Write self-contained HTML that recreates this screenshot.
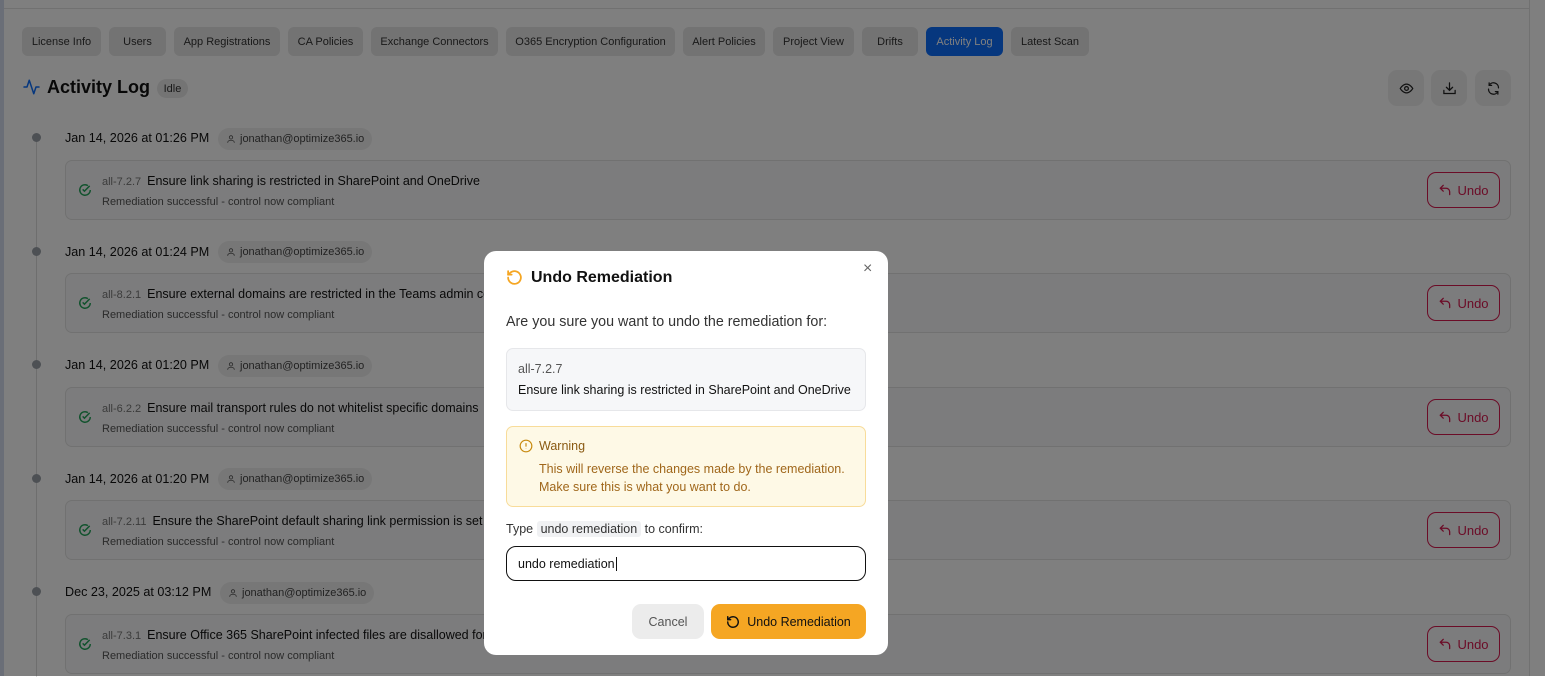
<!DOCTYPE html>
<html><head><meta charset="utf-8"><style>
*{box-sizing:border-box;margin:0;padding:0}
body{width:1545px;height:676px;overflow:hidden;background:#fff;font-family:"Liberation Sans",sans-serif;position:relative;color:#111}
.abs{position:absolute}
.lbar{left:0;top:0;width:4px;height:676px;background:#d4ddef}
.topl{left:4px;top:8px;width:1525px;height:1px;background:#e2e2e2}
.rl{left:1529px;top:0;width:1px;height:676px;background:#e2e2e2}
.tab{position:absolute;top:27px;height:29px;border-radius:6px;background:#e6e6e6;font-size:11px;color:#333;display:flex;align-items:center;justify-content:center}
.tab.act{background:#0d6efd;color:#fff}
h1{position:absolute;left:47px;top:77px;font-size:18px;font-weight:bold;color:#111}
.idle{left:157px;top:79px;width:31px;height:19px;border-radius:10px;background:#e8e8e8;font-size:11px;color:#333;display:flex;align-items:center;justify-content:center}
.ib{position:absolute;top:70px;width:36px;height:36px;border-radius:9px;background:#efefef;display:flex;align-items:center;justify-content:center}
.tl{left:36px;top:137px;width:1px;height:540px;background:#ddd}
.dot{position:absolute;left:32px;width:9px;height:9px;border-radius:50%;background:#9aa0a8}
.date{position:absolute;left:65px;font-size:12.6px;color:#111}
.chip{position:absolute;left:218px;height:22px;border-radius:11px;background:#efefef;font-size:11px;color:#444;display:flex;align-items:center;padding:0 8px 0 8px;gap:4px}
.card{position:absolute;left:65px;width:1446px;height:60px;border:1px solid #e2e2e2;border-radius:7px;background:#f8f9fa}
.card .ck{position:absolute;left:12px;top:22px}
.card .t{position:absolute;left:36px;top:13px;font-size:12.5px;color:#111;white-space:nowrap}
.card .t span{font-size:11px;color:#777;margin-right:6px}
.card .s{position:absolute;left:36px;top:35px;font-size:11px;color:#555}
.card .u{position:absolute;left:1361px;top:11px;width:73px;height:36px;border:1px solid #d6194f;border-radius:9px;color:#d6194f;font-size:13px;display:flex;align-items:center;justify-content:center;gap:5px}
.ov{left:0;top:0;width:1545px;height:676px;background:rgba(0,0,0,.5)}
.m{left:484px;top:251px;width:404px;height:404px;background:#fff;border-radius:12px}
</style></head><body>
<svg width="0" height="0" style="position:absolute"><defs>
<symbol id="p" viewBox="0 0 24 24"><g fill="none" stroke="#555" stroke-width="2"><circle cx="12" cy="8" r="4"/><path d="M4 21c0-4 4-6 8-6s8 2 8 6"/></g></symbol>
<symbol id="un" viewBox="0 0 24 24"><g fill="none" stroke="#d6194f" stroke-width="2.2" stroke-linecap="round" stroke-linejoin="round"><path d="M9 14L4 9l5-5"/><path d="M4 9h10a6 6 0 0 1 6 6v5"/></g></symbol>
</defs></svg>
<div class="abs lbar"></div><div class="abs topl"></div><div class="abs rl"></div>
<div class="tab" style="left:22px;width:79px">License Info</div>
<div class="tab" style="left:109px;width:57px">Users</div>
<div class="tab" style="left:174px;width:106px">App Registrations</div>
<div class="tab" style="left:288px;width:75px">CA Policies</div>
<div class="tab" style="left:371px;width:127px">Exchange Connectors</div>
<div class="tab" style="left:506px;width:169px">O365 Encryption Configuration</div>
<div class="tab" style="left:683px;width:82px">Alert Policies</div>
<div class="tab" style="left:773px;width:81px">Project View</div>
<div class="tab" style="left:862px;width:56px">Drifts</div>
<div class="tab act" style="left:926px;width:77px">Activity Log</div>
<div class="tab" style="left:1011px;width:78px">Latest Scan</div>
<svg class="abs" style="left:22px;top:78px" width="19" height="18" viewBox="0 0 24 24" fill="none" stroke="#0d6efd" stroke-width="2" stroke-linecap="round" stroke-linejoin="round"><path d="M22 12h-4l-3 9L9 3l-3 9H2"/></svg>
<h1>Activity Log</h1>
<div class="abs idle">Idle</div>
<div class="ib" style="left:1388px"><svg width="15" height="15" viewBox="0 0 24 24" fill="none" stroke="#222" stroke-width="2"><path d="M2 12s4-7 10-7 10 7 10 7-4 7-10 7S2 12 2 12z"/><circle cx="12" cy="12" r="3"/></svg></div>
<div class="ib" style="left:1431px"><svg width="15" height="15" viewBox="0 0 24 24" fill="none" stroke="#222" stroke-width="2" stroke-linecap="round"><path d="M12 3v12M7 10l5 5 5-5M3 15v5h18v-5"/></svg></div>
<div class="ib" style="left:1475px"><svg width="15" height="15" viewBox="0 0 24 24" fill="none" stroke="#222" stroke-width="2" stroke-linecap="round"><path d="M20 11A8 8 0 0 0 5 7M4 13a8 8 0 0 0 15 4"/><path d="M5 3v4h4M19 21v-4h-4"/></svg></div>
<div class="abs tl"></div>

<div class="dot" style="top:133px"></div><div class="date" style="top:131px">Jan 14, 2026 at 01:26 PM</div>
<div class="chip" style="top:128px"><svg width="10" height="10"><use href="#p"/></svg> jonathan@optimize365.io</div>
<div class="card" style="top:160px"><svg class="ck" width="14" height="14" viewBox="0 0 24 24" fill="none" stroke="#22a55a" stroke-width="2.5"><path d="M21 12a9 9 0 1 1-4-7.5"/><path d="M8 11l3 3 9-9"/></svg><div class="t"><span>all-7.2.7</span>Ensure link sharing is restricted in SharePoint and OneDrive</div><div class="s">Remediation successful - control now compliant</div><div class="u"><svg width="14" height="14"><use href="#un"/></svg>Undo</div></div>

<div class="dot" style="top:247px"></div><div class="date" style="top:245px">Jan 14, 2026 at 01:24 PM</div>
<div class="chip" style="top:241px"><svg width="10" height="10"><use href="#p"/></svg> jonathan@optimize365.io</div>
<div class="card" style="top:273px"><svg class="ck" width="14" height="14" viewBox="0 0 24 24" fill="none" stroke="#22a55a" stroke-width="2.5"><path d="M21 12a9 9 0 1 1-4-7.5"/><path d="M8 11l3 3 9-9"/></svg><div class="t"><span>all-8.2.1</span>Ensure external domains are restricted in the Teams admin center</div><div class="s">Remediation successful - control now compliant</div><div class="u"><svg width="14" height="14"><use href="#un"/></svg>Undo</div></div>

<div class="dot" style="top:360px"></div><div class="date" style="top:358px">Jan 14, 2026 at 01:20 PM</div>
<div class="chip" style="top:355px"><svg width="10" height="10"><use href="#p"/></svg> jonathan@optimize365.io</div>
<div class="card" style="top:387px"><svg class="ck" width="14" height="14" viewBox="0 0 24 24" fill="none" stroke="#22a55a" stroke-width="2.5"><path d="M21 12a9 9 0 1 1-4-7.5"/><path d="M8 11l3 3 9-9"/></svg><div class="t"><span>all-6.2.2</span>Ensure mail transport rules do not whitelist specific domains</div><div class="s">Remediation successful - control now compliant</div><div class="u"><svg width="14" height="14"><use href="#un"/></svg>Undo</div></div>

<div class="dot" style="top:474px"></div><div class="date" style="top:472px">Jan 14, 2026 at 01:20 PM</div>
<div class="chip" style="top:468px"><svg width="10" height="10"><use href="#p"/></svg> jonathan@optimize365.io</div>
<div class="card" style="top:500px"><svg class="ck" width="14" height="14" viewBox="0 0 24 24" fill="none" stroke="#22a55a" stroke-width="2.5"><path d="M21 12a9 9 0 1 1-4-7.5"/><path d="M8 11l3 3 9-9"/></svg><div class="t"><span>all-7.2.11</span>Ensure the SharePoint default sharing link permission is set</div><div class="s">Remediation successful - control now compliant</div><div class="u"><svg width="14" height="14"><use href="#un"/></svg>Undo</div></div>

<div class="dot" style="top:587px"></div><div class="date" style="top:585px">Dec 23, 2025 at 03:12 PM</div>
<div class="chip" style="top:582px;left:220px"><svg width="10" height="10"><use href="#p"/></svg> jonathan@optimize365.io</div>
<div class="card" style="top:614px"><svg class="ck" width="14" height="14" viewBox="0 0 24 24" fill="none" stroke="#22a55a" stroke-width="2.5"><path d="M21 12a9 9 0 1 1-4-7.5"/><path d="M8 11l3 3 9-9"/></svg><div class="t"><span>all-7.3.1</span>Ensure Office 365 SharePoint infected files are disallowed for download</div><div class="s">Remediation successful - control now compliant</div><div class="u"><svg width="14" height="14"><use href="#un"/></svg>Undo</div></div>

<div class="abs ov"></div>
<div class="abs m">
 <svg class="abs" style="left:22px;top:18px" width="17" height="17" viewBox="0 0 24 24" fill="none" stroke="#f5a623" stroke-width="2.5" stroke-linecap="round"><path d="M3 12a9 9 0 1 0 3-6.7L3 8"/><path d="M3 3v5h5"/></svg>
 <div class="abs" style="left:47px;top:18px;font-size:16px;font-weight:bold;color:#111">Undo Remediation</div>
 <div class="abs" style="left:379px;top:9px;font-size:16px;color:#666">&#215;</div>
 <div class="abs" style="left:22px;top:63px;font-size:14.3px;color:#333">Are you sure you want to undo the remediation for:</div>
 <div class="abs" style="left:22px;top:97px;width:360px;height:63px;background:#f6f7f9;border:1px solid #e6e7ea;border-radius:7px">
  <div class="abs" style="left:11px;top:13px;font-size:12.5px;color:#555">all-7.2.7</div>
  <div class="abs" style="left:11px;top:34px;font-size:12.5px;color:#111;white-space:nowrap">Ensure link sharing is restricted in SharePoint and OneDrive</div>
 </div>
 <div class="abs" style="left:22px;top:175px;width:360px;height:81px;background:#fef9e6;border:1px solid #f8dc9a;border-radius:7px">
  <svg class="abs" style="left:12px;top:12px" width="14" height="14" viewBox="0 0 24 24" fill="none" stroke="#c88a10" stroke-width="2"><circle cx="12" cy="12" r="10"/><path d="M12 7v6M12 16.5v.5"/></svg>
  <div class="abs" style="left:32px;top:12px;font-size:12.5px;color:#8a5a12">Warning</div>
  <div class="abs" style="left:32px;top:33px;font-size:12.5px;color:#a0671b;line-height:18px;white-space:nowrap">This will reverse the changes made by the remediation.<br>Make sure this is what you want to do.</div>
 </div>
 <div class="abs" style="left:22px;top:271px;font-size:12.5px;color:#333;white-space:nowrap">Type <span style="background:#f0f1f3;border-radius:3px;padding:1px 4px">undo remediation</span> to confirm:</div>
 <div class="abs" style="left:22px;top:295px;width:360px;height:35px;border:1.5px solid #111;border-radius:10px;font-size:12.5px;padding:10px 0 0 11px;color:#111">undo remediation<span style="border-left:1px solid #111;margin-left:1px"></span></div>
 <div class="abs" style="left:148px;top:353px;width:72px;height:35px;border-radius:9px;background:#ececec;font-size:12.5px;color:#555;display:flex;align-items:center;justify-content:center">Cancel</div>
 <div class="abs" style="left:227px;top:353px;width:155px;height:35px;border-radius:9px;background:#f5a623;font-size:12.5px;color:#111;display:flex;align-items:center;justify-content:center;gap:7px"><svg width="14" height="14" viewBox="0 0 24 24" fill="none" stroke="#111" stroke-width="2.5" stroke-linecap="round"><path d="M3 12a9 9 0 1 0 3-6.7L3 8"/><path d="M3 3v5h5"/></svg>Undo Remediation</div>
</div>
</body></html>
